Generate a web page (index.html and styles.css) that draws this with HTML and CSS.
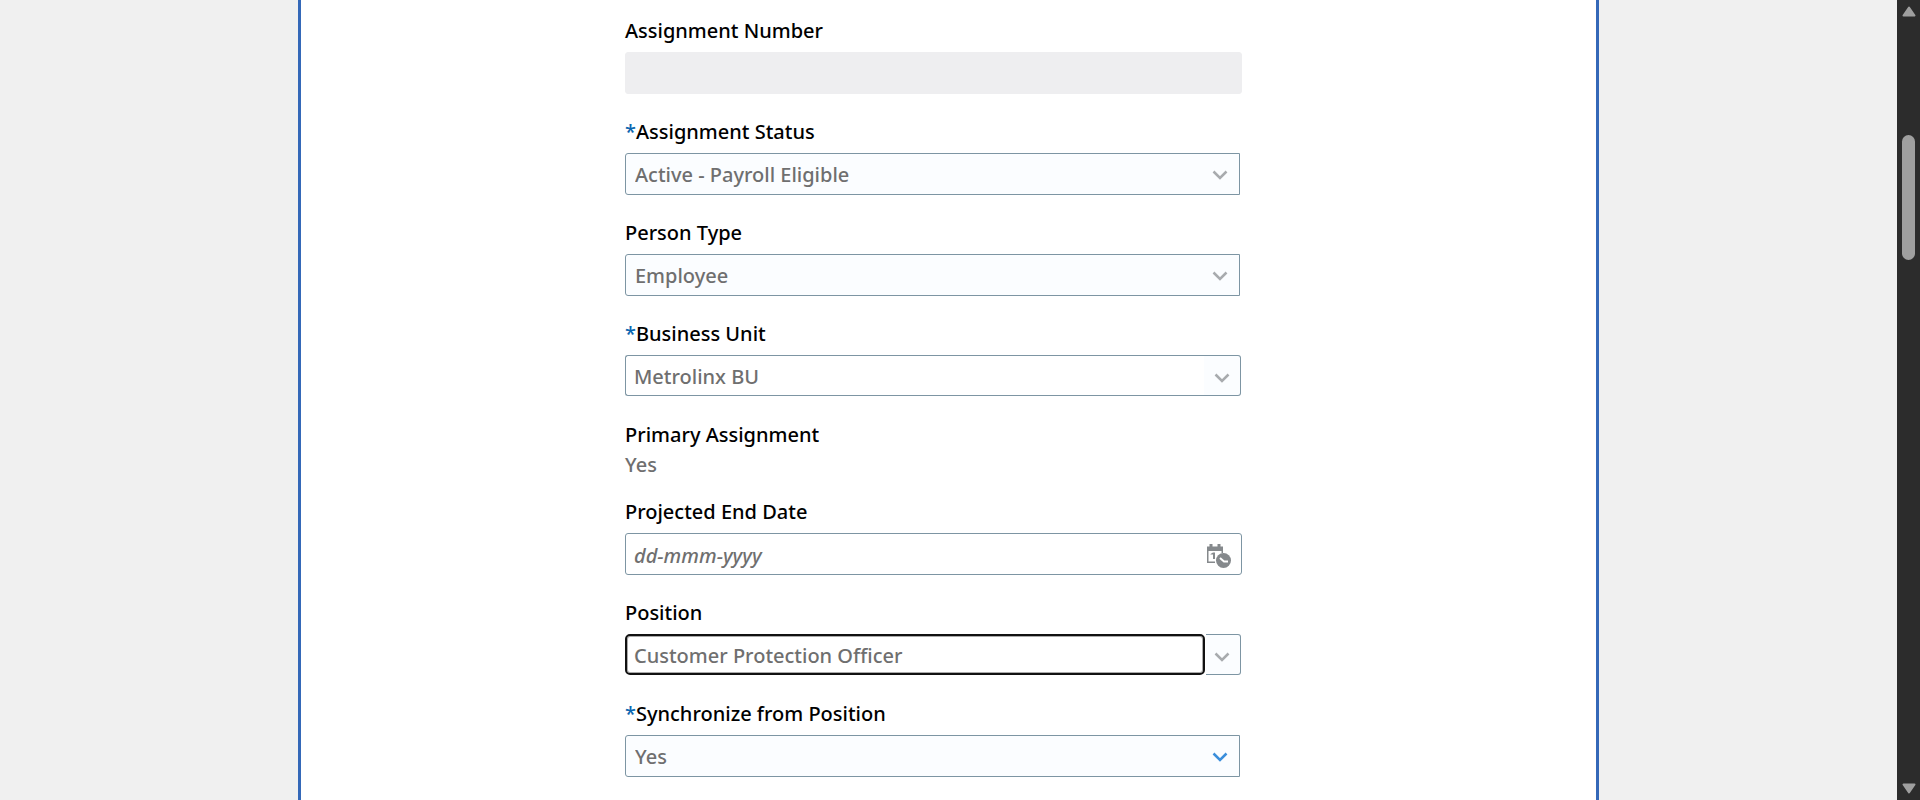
FILE: index.html
```html
<!DOCTYPE html>
<html lang="en">
<head>
<meta charset="utf-8">
<title>Assignment</title>
<link rel="stylesheet" href="styles.css">
</head>
<body>
<div class="page">
  <main class="panel">
    <form class="form">
      <div class="field">
        <label class="label" for="number">Assignment Number</label>
        <input class="control readonly" id="number" type="text" readonly>
      </div>
      <div class="field">
        <label class="label" for="status"><span class="required">*</span>Assignment Status</label>
        <div class="choice">
          <select class="control select" id="status"><option>Active - Payroll Eligible</option></select>
          <svg class="chevron" viewBox="0 0 16 10" aria-hidden="true"><path d="M1.500 1.500 8 8l6.500-6.500"/></svg>
        </div>
      </div>
      <div class="field">
        <label class="label" for="person">Person Type</label>
        <div class="choice">
          <select class="control select" id="person"><option>Employee</option></select>
          <svg class="chevron" viewBox="0 0 16 10" aria-hidden="true"><path d="M1.500 1.500 8 8l6.500-6.500"/></svg>
        </div>
      </div>
      <div class="field">
        <label class="label" for="unit"><span class="required">*</span>Business Unit</label>
        <div class="combo">
          <input class="control combo-input" id="unit" type="text" value="Metrolinx BU">
          <button class="combo-button" type="button" aria-label="Show business units"><svg class="combo-icon" viewBox="0 0 16 10" aria-hidden="true"><path d="M1.500 1.500 8 8l6.500-6.500"/></svg></button>
        </div>
      </div>
      <div class="field">
        <span class="label">Primary Assignment</span>
        <span class="value">Yes</span>
      </div>
      <div class="field">
        <label class="label" for="end">Projected End Date</label>
        <div class="date">
          <input class="date-input" id="end" type="text" placeholder="dd-mmm-yyyy">
          <button class="date-button" type="button" aria-label="Select date and time">
            <svg class="date-icon" viewBox="0 0 24 24" aria-hidden="true">
              <path d="M0 2.500h2.500V0h3v2.500h5V0h3v2.500H16V9h-1.500V7h-13v10.500H8V19H0z"/>
              <path d="M3.500 10 6 8.500h2V15H6v-4.500H3.500z"/>
              <circle cx="16.500" cy="16.500" r="7.500"/>
              <path class="hands" d="M13 14l4 3.500h4"/>
            </svg>
          </button>
        </div>
      </div>
      <div class="field">
        <label class="label" for="position">Position</label>
        <div class="combo combo-active">
          <input class="control combo-input" id="position" type="text" value="Customer Protection Officer">
          <button class="combo-button" type="button" aria-label="Show positions"><svg class="combo-icon" viewBox="0 0 16 10" aria-hidden="true"><path d="M1.500 1.500 8 8l6.500-6.500"/></svg></button>
        </div>
      </div>
      <div class="field">
        <label class="label" for="sync"><span class="required">*</span>Synchronize from Position</label>
        <div class="choice choice-enabled">
          <select class="control select" id="sync"><option>Yes</option></select>
          <svg class="chevron" viewBox="0 0 16 10" aria-hidden="true"><path d="M1.500 1.500 8 8l6.500-6.500"/></svg>
        </div>
      </div>
    </form>
  </main>
  <div class="scrollbar" aria-hidden="true">
    <svg class="arrow" viewBox="0 0 14 11"><path d="M7 1.500 12.500 9.500h-11z"/></svg>
    <div class="track"><div class="thumb"></div></div>
    <svg class="arrow" viewBox="0 0 14 11"><path d="M7 9.500 1.500 1.500h11z"/></svg>
  </div>
</div>
</body>
</html>
```
FILE: styles.css
```css
* { box-sizing: border-box; }

body {
  margin: 0;
  background: #f0f0f0;
  color: #000;
  font: 500 20px/22px "Noto Sans", "Open Sans", sans-serif;
}

.page {
  display: grid;
  grid-template-columns: 1fr 23px;
  min-height: 100vh;
}

.panel {
  width: 68.6%;
  margin: 0 auto;
  padding: 20px 30px 16px 0;
  border: solid #3468b8;
  border-width: 0 3px;
  background: #fff;
}

.form {
  display: grid;
  gap: 27px;
  max-width: 617px;
  margin: 0 auto;
}

.field {
  display: grid;
  gap: 10px;
}

.label { display: block; }

.required {
  color: #0a66b0;
}

.value {
  color: #6f6f6f;
  line-height: 18px;
}

.control {
  display: block;
  width: 100%;
  height: 42px;
  padding: 2px 8px 0;
  border: 1px solid #7d95a3;
  border-radius: 3px;
  outline: 0;
  background: #fff;
  color: #6f6f6f;
  font: inherit;
}

.readonly {
  border-color: #eeeef0;
  background: #eeeef0;
}

.choice {
  display: grid;
  align-items: center;
  margin-right: 2px;
}

.choice > * { grid-area: 1 / 1; }

.select {
  appearance: none;
  padding: 2px 9px 0;
  border-radius: 3px 0 0 3px;
  background: #fbfdff;
  line-height: 30px;
}

.chevron, .combo-icon {
  width: 16px;
  height: 10px;
  fill: none;
  stroke: #a8abae;
  stroke-width: 2.5;
  pointer-events: none;
}

.chevron {
  justify-self: end;
  margin: 2px 12px 0 0;
}

.choice-enabled .chevron { stroke: #3b8edb; }

.combo {
  display: flex;
  margin-right: 1px;
  padding-bottom: 1px;
}

.combo-input {
  flex: 1;
  min-width: 0;
  height: 41px;
  border-right: 0;
  border-radius: 3px 0 0 3px;
}

.combo-button {
  display: grid;
  place-items: center;
  width: 37px;
  height: 41px;
  padding: 4px 0 0;
  border: 1px solid #7d95a3;
  border-left: 0;
  border-radius: 0 3px 3px 0;
  background: #fbfdff;
}

.combo-active .combo-input {
  border: 2px solid #111;
  border-radius: 5px;
  box-shadow: inset 0 0 0 1px #aaa;
  padding: 2px 7px 0;
}

.combo-active .combo-button {
  width: 35px;
  margin-left: 1px;
  padding-right: 2px;
}

.date {
  display: flex;
  height: 42px;
  border: 1px solid #7d95a3;
  border-radius: 3px;
}

.date-input {
  flex: 1;
  min-width: 0;
  padding: 3px 8px 0;
  border: 0;
  outline: 0;
  background: none;
  color: #6f6f6f;
  font: inherit;
}

.date-input::placeholder {
  color: #6f6f6f;
  font-style: italic;
  opacity: 1;
}

.date-button {
  padding: 4px 10px 0 0;
  border: 0;
  background: none;
}

.date-icon {
  display: block;
  width: 24px;
  height: 24px;
  fill: #85898c;
}

.hands {
  fill: none;
  stroke: #fff;
  stroke-width: 2;
}

.scrollbar {
  display: grid;
  grid-template-rows: auto 1fr auto;
  justify-items: center;
  padding: 6px 0 6px;
  background: #2c2c2c;
}

.arrow {
  width: 14px;
  height: 11px;
  fill: #9f9f9f;
  stroke: #9f9f9f;
  stroke-width: 2;
  stroke-linejoin: round;
}

.track {
  display: grid;
  grid-template-rows: 118fr 125fr 523fr;
}

.thumb {
  grid-row: 2;
  width: 13px;
  border-radius: 7px;
  background: #9f9f9f;
}
```
